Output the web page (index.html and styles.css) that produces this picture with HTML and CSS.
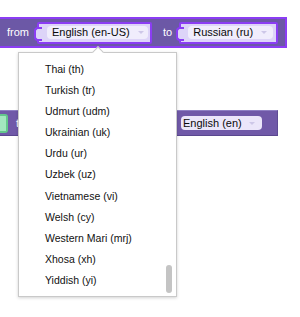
FILE: index.html
```html
<!DOCTYPE html>
<html>
<head>
<meta charset="utf-8">
<link rel="stylesheet" href="styles.css">
</head>
<body>
<div class="workspace">
  <div class="block block-main">
    <span class="label label-from">from</span>
    <div class="input input-from">
      <div class="field"><span class="field-text">English (en-US)</span><span class="caret"></span></div>
    </div>
    <span class="label label-to">to</span>
    <div class="input input-to">
      <div class="field"><span class="field-text">Russian (ru)</span><span class="caret"></span></div>
    </div>
  </div>

  <div class="block block-second">
    <div class="green-stub"></div>
    <span class="label label-to2">to</span>
    <div class="field field-flat"><span class="field-text">English (en)</span><span class="caret"></span></div>
  </div>

  <div class="menu">
    <div class="menu-arrow"></div>
    <ul class="menu-list">
      <li>Thai (th)</li>
      <li>Turkish (tr)</li>
      <li>Udmurt (udm)</li>
      <li>Ukrainian (uk)</li>
      <li>Urdu (ur)</li>
      <li>Uzbek (uz)</li>
      <li>Vietnamese (vi)</li>
      <li>Welsh (cy)</li>
      <li>Western Mari (mrj)</li>
      <li>Xhosa (xh)</li>
      <li>Yiddish (yi)</li>
    </ul>
    <div class="scrollbar"></div>
  </div>
</div>
</body>
</html>
```
FILE: styles.css
```css
* { box-sizing: border-box; }
html, body {
  margin: 0;
  padding: 0;
  background: #ffffff;
  font-family: "Liberation Sans", Arial, sans-serif;
}
.workspace {
  position: relative;
  width: 300px;
  height: 317px;
  overflow: hidden;
  padding-top: 17px;
}
.block {
  display: flex;
  align-items: center;
}
.block-main {
  width: 287px;
  height: 31px;
  background: #6c58a6;
  border: 2px solid #8b3df4;
  border-left: none;
}
.label {
  color: #ffffff;
  font-size: 11px;
  line-height: 13px;
}
.label-from { margin-left: 7px; }
.label-to { margin-left: 11px; }
.input {
  position: relative;
  height: 22px;
  border: 2px solid #8b3df4;
  background: #ddd4f8;
  display: flex;
  align-items: center;
  border-radius: 2px;
}
.input::before {
  content: "";
  position: absolute;
  left: -5px;
  top: 3px;
  width: 6px;
  height: 10px;
  background: #ddd4f8;
  border: 2px solid #8b3df4;
  border-right: none;
  border-radius: 4px 0 0 4px;
}
.input-from {
  margin-left: 8px;
  width: 115px;
  padding-left: 8px;
  padding-right: 2px;
}
.input-to {
  margin-left: 7px;
  width: 99px;
  padding-left: 7px;
  padding-right: 3px;
}
.field {
  flex: 1;
  height: 13px;
  background: #f0edfc;
  border-radius: 4px;
  display: flex;
  align-items: center;
  padding-left: 5px;
}
.field-text {
  font-size: 11px;
  line-height: 13px;
  color: #0a0a0a;
  white-space: nowrap;
}
.caret {
  margin-left: 8px;
  width: 0;
  height: 0;
  border-left: 3px solid transparent;
  border-right: 3px solid transparent;
  border-top: 3px solid #cdc7e8;
}
.block-second {
  margin-top: 62px;
  width: 278px;
  height: 26px;
  background: #7059a8;
  border-top: 1px solid #8e7fc3;
  border-bottom: 1px solid #5a478f;
  border-right: 1px solid #5e4b94;
}
.green-stub {
  width: 8px;
  height: 19px;
  background: #a3e6c0;
  border: 2px solid #63c78c;
  border-left: none;
  border-radius: 0 3px 3px 0;
}
.label-to2 { margin-left: 8px; }
.field-flat {
  flex: 0 0 81px;
  height: 14px;
  margin-left: auto;
  margin-right: 15px;
  padding-left: 2px;
  background: #ebe6fa;
}
.field-flat .caret { margin-left: 7px; }
.menu {
  position: absolute;
  left: 18px;
  top: 52px;
  width: 159px;
  height: 245px;
  background: #ffffff;
  border: 1px solid #c9c9c9;
  box-shadow: 0 1px 3px rgba(0, 0, 0, 0.18);
}
.menu-arrow {
  position: absolute;
  left: 75px;
  top: -5px;
  width: 8px;
  height: 8px;
  background: #ffffff;
  border-top: 1px solid #c9c9c9;
  border-left: 1px solid #c9c9c9;
  transform: rotate(45deg);
}
.menu-list {
  list-style: none;
  margin: 0;
  padding: 6px 0 0 0;
}
.menu-list li {
  height: 21.1px;
  line-height: 21.1px;
  padding-left: 26px;
  font-size: 10.5px;
  color: #111111;
  white-space: nowrap;
}
.scrollbar {
  position: absolute;
  right: 4px;
  top: 212px;
  width: 6px;
  height: 28px;
  background: #c4c4c4;
  border-radius: 3px;
}
```
